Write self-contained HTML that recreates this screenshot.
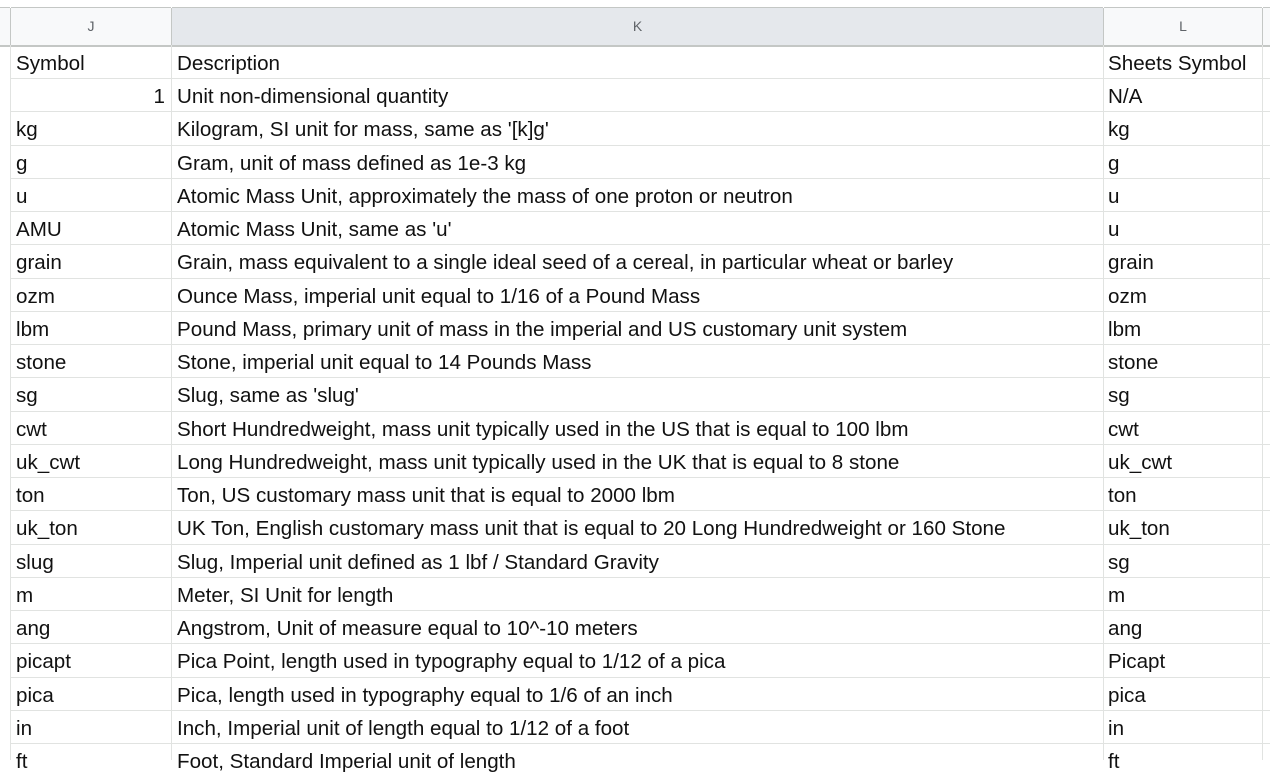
<!DOCTYPE html>
<html><head><style>
body{margin:0;width:1270px;height:760px;overflow:hidden;background:#fff;font-family:"Liberation Sans",Arial,sans-serif;position:relative}
.hdr{position:absolute;top:7px;height:37px;border-top:1px solid #c4c7c5;border-bottom:2px solid #c4c7c5;background:#f8f9fa;font-size:14px;color:#5f6368;line-height:37px;text-align:center;box-sizing:content-box}
.v{position:absolute;top:8px;bottom:0;width:1px;background:#e1e3e1}
.vh{position:absolute;top:8px;height:37px;width:1px;background:#c4c7c5}
.r{position:absolute;left:10px;right:0;height:1px;background:#e1e3e1}
.t{position:absolute;font-size:20.6px;color:#111;white-space:nowrap;line-height:33px;height:33px}
</style></head><body>
<div class="hdr" style="left:0;width:10px"></div>
<div class="hdr" style="left:11px;width:160px">J</div>
<div class="hdr" style="left:172px;width:931px;background:#e5e8ec">K</div>
<div class="hdr" style="left:1104px;width:158px">L</div>
<div class="hdr" style="left:1263px;width:7px"></div>
<div class="v" style="left:10px"></div><div class="v" style="left:171px"></div><div class="v" style="left:1103px"></div><div class="v" style="left:1262px"></div>
<div class="vh" style="left:10px"></div><div class="vh" style="left:171px"></div><div class="vh" style="left:1103px"></div><div class="vh" style="left:1262px"></div>
<div id="g"></div>
<script>
var d=[["Symbol","Description","Sheets Symbol"],["1","Unit non-dimensional quantity","N/A"],["kg","Kilogram, SI unit for mass, same as '[k]g'","kg"],["g","Gram, unit of mass defined as 1e-3 kg","g"],["u","Atomic Mass Unit, approximately the mass of one proton or neutron","u"],["AMU","Atomic Mass Unit, same as 'u'","u"],["grain","Grain, mass equivalent to a single ideal seed of a cereal, in particular wheat or barley","grain"],["ozm","Ounce Mass, imperial unit equal to 1/16 of a Pound Mass","ozm"],["lbm","Pound Mass, primary unit of mass in the imperial and US customary unit system","lbm"],["stone","Stone, imperial unit equal to 14 Pounds Mass","stone"],["sg","Slug, same as 'slug'","sg"],["cwt","Short Hundredweight, mass unit typically used in the US that is equal to 100 lbm","cwt"],["uk_cwt","Long Hundredweight, mass unit typically used in the UK that is equal to 8 stone","uk_cwt"],["ton","Ton, US customary mass unit that is equal to 2000 lbm","ton"],["uk_ton","UK Ton, English customary mass unit that is equal to 20 Long Hundredweight or 160 Stone","uk_ton"],["slug","Slug, Imperial unit defined as 1 lbf / Standard Gravity","sg"],["m","Meter, SI Unit for length","m"],["ang","Angstrom, Unit of measure equal to 10^-10 meters","ang"],["picapt","Pica Point, length used in typography equal to 1/12 of a pica","Picapt"],["pica","Pica, length used in typography equal to 1/6 of an inch","pica"],["in","Inch, Imperial unit of length equal to 1/12 of a foot","in"],["ft","Foot, Standard Imperial unit of length","ft"]];
var h="";
for(var i=0;i<d.length;i++){var y=Math.round(45+i*33.24);
if(i>0)h+='<div class="r" style="top:'+y+'px"></div>';
var y2=y+2;
if(i==1)h+='<div class="t" style="top:'+y2+'px;left:11px;width:154px;text-align:right">1</div>';
else h+='<div class="t" style="top:'+y2+'px;left:16px">'+d[i][0]+'</div>';
h+='<div class="t" style="top:'+y2+'px;left:177px">'+d[i][1]+'</div>';
h+='<div class="t" style="top:'+y2+'px;left:1108px">'+d[i][2]+'</div>';}
document.getElementById("g").innerHTML=h;
</script>
</body></html>
